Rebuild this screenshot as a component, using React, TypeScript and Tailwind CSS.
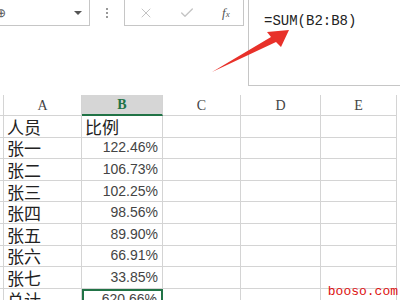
import { X, Check } from 'lucide-react'

const rows = [
  { name: '人员', value: '比例', head: true },
  { name: '张一', value: '122.46%' },
  { name: '张二', value: '106.73%' },
  { name: '张三', value: '102.25%' },
  { name: '张四', value: '98.56%' },
  { name: '张五', value: '89.90%' },
  { name: '张六', value: '66.91%' },
  { name: '张七', value: '33.85%' },
]

const cols = [
  { key: 'A', w: 'w-[78px]' },
  { key: 'B', w: 'w-[81px]' },
  { key: 'C', w: 'w-[78px]' },
  { key: 'D', w: 'w-[80px]' },
  { key: 'E', w: 'w-[76px]' },
]

const cjk = { fontFamily: '"Noto Sans CJK SC", sans-serif' }

export default function App() {
  return (
    <div className="relative w-[400px] h-[300px] overflow-hidden bg-white">
      {/* formula bar */}
      <div className="flex items-start h-[95px]">
        <div className="-ml-[10px] w-[100px] h-[26px] border-r border-b border-[#c6c6c6] flex items-center justify-between pl-[6px] pr-[7px]">
          <span className="text-[12px] text-[#555]" style={{ fontFamily: '"Liberation Sans", sans-serif' }}>⊕</span>
          <span className="w-0 h-0 border-l-[4px] border-r-[4px] border-t-[4px] border-l-transparent border-r-transparent border-t-[#555]" />
        </div>
        <div className="w-[34px] h-[26px] flex flex-col items-center justify-center gap-[2px]">
          <span className="w-[2px] h-[2px] bg-[#999]" />
          <span className="w-[2px] h-[2px] bg-[#999]" />
          <span className="w-[2px] h-[2px] bg-[#999]" />
        </div>
        <div className="w-[120px] h-[26px] border-l border-r border-b border-[#c6c6c6] flex items-center">
          <X className="ml-[13px] w-[16px] h-[16px] text-[#c4c4c4]" strokeWidth={1.5} />
          <Check className="ml-[25px] w-[16px] h-[16px] text-[#c4c4c4]" strokeWidth={2} />
          <span className="ml-[27px] text-[13px] italic text-[#555]" style={{ fontFamily: '"Liberation Serif", serif' }}>
            f<span className="text-[9px]">x</span>
          </span>
        </div>
        <div className="ml-[4px] flex-1 h-[86px] border-l border-b border-[#c6c6c6] pl-[15px] pt-[7px]">
          <span className="text-[14px] text-[#222]" style={{ fontFamily: '"Liberation Mono", monospace' }}>=SUM(B2:B8)</span>
        </div>
      </div>

      {/* sheet */}
      <div className="flex flex-col text-[#333]">
        <div className="flex h-[21px]">
          <div className="w-[4px] border-r border-b border-[#d4d4d4]" />
          {cols.map((c) => (
            <div
              key={c.key}
              className={`${c.w} flex items-center justify-center text-[14px] ${
                c.key === 'B'
                  ? 'bg-[#d6d6d6] border-b-2 border-b-[#217346] border-r border-r-[#d4d4d4] text-[#217346] font-bold'
                  : 'border-r border-b border-[#d4d4d4] text-[#444]'
              }`}
              style={{ fontFamily: '"Liberation Serif", serif' }}
            >
              {c.key}
            </div>
          ))}
        </div>
        {rows.map((r) => (
          <div key={r.name} className="flex h-[21.6px]">
            <div className="w-[4px] border-r border-b border-[#d4d4d4]" />
            <div className="w-[78px] border-r border-b border-[#d4d4d4] pl-[3px] flex items-center text-[17px] text-[#222] leading-none" style={cjk}>
              {r.name}
            </div>
            {r.head ? (
              <div className="w-[81px] border-r border-b border-[#d4d4d4] pl-[3px] flex items-center text-[17px] text-[#222] leading-none" style={cjk}>
                {r.value}
              </div>
            ) : (
              <div className="w-[81px] border-r border-b border-[#d4d4d4] pr-[4px] flex items-center justify-end text-[14px] text-[#444]" style={{ fontFamily: '"Liberation Sans", sans-serif' }}>
                {r.value}
              </div>
            )}
            <div className="w-[78px] border-r border-b border-[#d4d4d4]" />
            <div className="w-[80px] border-r border-b border-[#d4d4d4]" />
            <div className="w-[76px] border-r border-b border-[#d4d4d4]" />
          </div>
        ))}
        <div className="flex h-[21.6px]">
          <div className="w-[4px] border-r border-[#d4d4d4]" />
          <div className="w-[78px] border-r border-[#d4d4d4] pl-[3px] flex items-center text-[17px] text-[#222] leading-none" style={cjk}>
            总计
          </div>
          <div className="w-[81px] border-2 border-[#217346] pr-[4px] flex items-center justify-end text-[14px] text-[#444]" style={{ fontFamily: '"Liberation Sans", sans-serif' }}>
            620.66%
          </div>
          <div className="w-[78px] border-r border-[#d4d4d4]" />
          <div className="w-[80px] border-r border-[#d4d4d4]" />
          <div className="w-[76px] border-r border-[#d4d4d4]" />
        </div>
      </div>

      {/* red arrow */}
      <svg className="absolute left-0 top-0" width="400" height="100" viewBox="0 0 400 100">
        <polygon points="212,72 271,37 267,32 289,30 281,47 276,42 212,72" fill="#e8312a" />
      </svg>

      <div className="absolute right-[2px] bottom-[2px] text-[13px] text-[#d11] leading-none" style={{ fontFamily: '"Liberation Mono", monospace' }}>
        booso.com
      </div>
    </div>
  )
}
